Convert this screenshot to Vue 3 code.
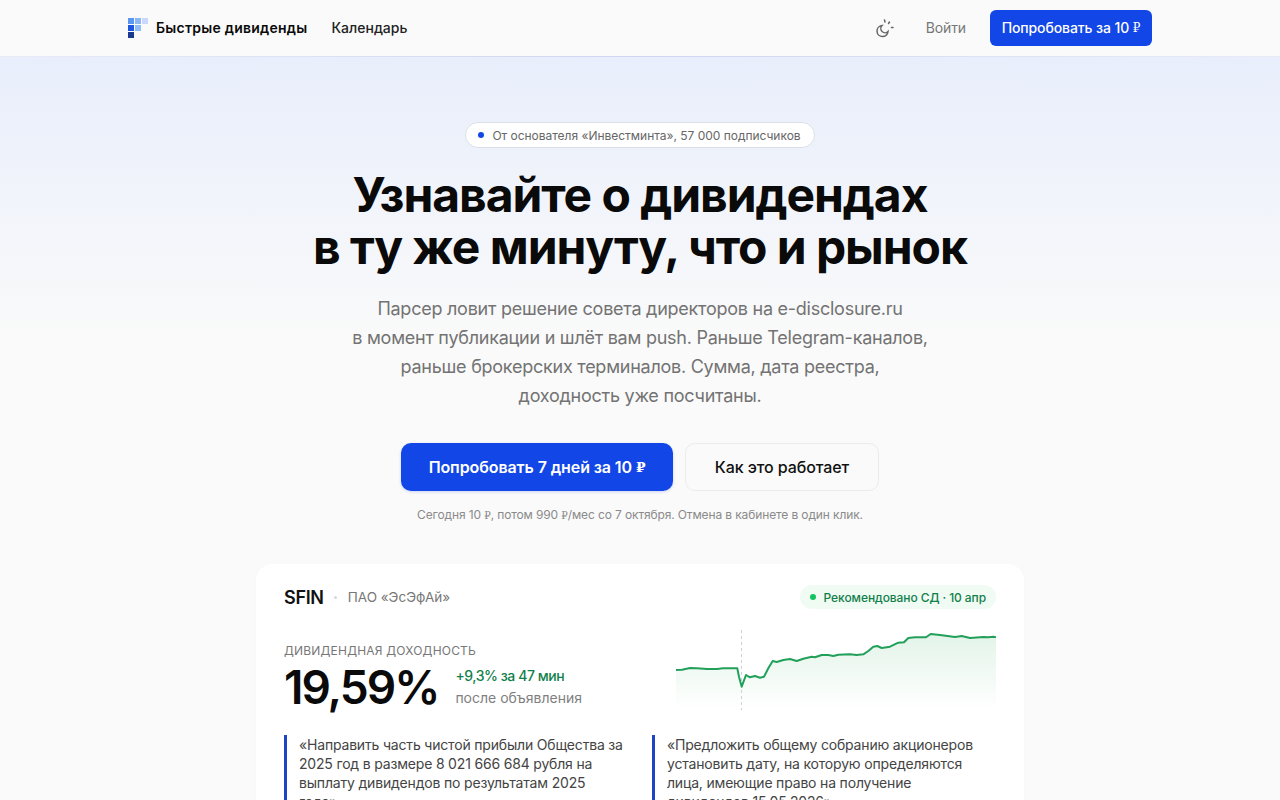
<script setup>
const logo = [
  '#5b96f0', '#8db8f5', '#c9d8fb',
  '#1d55e0', '#8fbdf5', 'transparent',
  '#1a3a8f', 'transparent', 'transparent'
]
const points = '676,670 682,669.7 690,668 697,668.3 707,669 717,669 723,668.3 737.3,668.3 739,676.7 741.7,686.7 746,675 750,677.3 755,676 760,677.7 764,676.7 768.3,668.3 772.7,661 776.7,662 783.3,660 790,659 796.7,661 803.3,658.7 811.7,656.7 815,657.3 821.7,655 828.3,655 833.3,656 838.3,654.7 850,654.3 856.7,655 863.3,654.3 868.3,651 873.3,646.7 877.3,646 881.7,648 890,646.7 898.3,642.7 904,642.3 908.3,638 915,637.3 926,637.3 930.7,634 940,635 955,637 961.7,636 970,638 983.3,637 988.3,637.3 993.3,636.7 996,637.3'
  .split(' ').map(p => { const [x, y] = p.split(',').map(Number); return `${x - 676},${y - 630}` }).join(' ')
const area = `0,80 ${points} 320,80`
</script>

<template>
  <div class="page">
    <header class="nav">
      <div class="nav-in">
        <div class="logo">
          <i v-for="(c, i) in logo" :key="i" :style="{ background: c }"></i>
        </div>
        <span class="brand">Быстрые дивиденды</span>
        <span class="link">Календарь</span>
        <span class="spacer"></span>
        <svg class="theme" width="20" height="20" viewBox="0 0 20 20" fill="none" stroke="#666" stroke-width="1.5" stroke-linecap="round">
          <path d="M7 7.6A5.5 5.5 0 1 0 13 13.4 3.8 3.8 0 0 1 7 7.6z" />
          <path d="M9.5 2 10 4" />
          <path d="M14.5 4 13.5 5.5" />
          <path d="M16.5 9.5H18" />
        </svg>
        <span class="login">Войти</span>
        <a class="btn-nav">Попробовать за 10 <span class="rub">₽</span></a>
      </div>
    </header>

    <section class="hero">
      <div class="chip"><i class="chip-dot"></i>От основателя «Инвестминта», 57 000 подписчиков</div>
      <h1>Узнавайте о дивидендах<br>в ту же минуту, что и рынок</h1>
      <p class="lead">
        Парсер ловит решение совета директоров на e-disclosure.ru<br>
        в момент публикации и шлёт вам push. Раньше Telegram-каналов,<br>
        раньше брокерских терминалов. Сумма, дата реестра,<br>
        доходность уже посчитаны.
      </p>
      <div class="actions">
        <a class="btn primary">Попробовать 7 дней за 10 <span class="rub">₽</span></a>
        <a class="btn ghost">Как это работает</a>
      </div>
      <p class="note">Сегодня 10 <span class="rub">₽</span>, потом 990 <span class="rub">₽</span>/мес со 7 октября. Отмена в кабинете в один клик.</p>

      <article class="card">
        <div class="card-head">
          <b class="ticker">SFIN</b>
          <i class="sep"></i>
          <span class="company">ПАО «ЭсЭфАй»</span>
          <span class="spacer"></span>
          <span class="pill"><i class="pill-dot"></i>Рекомендовано СД · 10 апр</span>
        </div>
        <div class="stats">
          <div>
            <div class="label">ДИВИДЕНДНАЯ ДОХОДНОСТЬ</div>
            <div class="yield-row">
              <div class="yield">19,59%</div>
              <div class="delta">
                <div class="up">+9,3% за 47 мин</div>
                <div class="after">после объявления</div>
              </div>
            </div>
          </div>
          <svg class="chart" width="320" height="80" viewBox="0 0 320 80">
            <defs>
              <linearGradient id="fill" x1="0" y1="0" x2="0" y2="1">
                <stop offset="0" stop-color="#16a34a" stop-opacity=".12" />
                <stop offset="1" stop-color="#16a34a" stop-opacity="0" />
              </linearGradient>
            </defs>
            <polygon :points="area" fill="url(#fill)" />
            <line x1="65.5" y1="0" x2="65.5" y2="80" stroke="#cfcfd4" stroke-width="1" stroke-dasharray="3 3" />
            <polyline :points="points" fill="none" stroke="#22a05a" stroke-width="2" stroke-linejoin="round" />
          </svg>
        </div>
        <div class="quotes">
          <blockquote>«Направить часть чистой прибыли Общества за 2025 год в размере 8 021 666 684 рубля на выплату дивидендов по результатам 2025 года»</blockquote>
          <blockquote>«Предложить общему собранию акционеров установить дату, на которую определяются лица, имеющие право на получение дивидендов 15.05.2026»</blockquote>
        </div>
      </article>
    </section>
  </div>
</template>

<style>
html, body { margin: 0; background: #fafafa; }
html { scrollbar-width: none; }
</style>

<style scoped>
.page {
  font-family: Inter, "Noto Sans", sans-serif;
  color: #0a0a0a;
  min-height: 800px;
  background: linear-gradient(180deg, #e8eefb 57px, #fafafa 340px);
}
.nav { height: 56px; background: #fafafa; border-bottom: 1px solid; border-image: linear-gradient(90deg, #e9ecf5, #d0d5f0 50%, #e9ecf5) 1; }
.nav-in { width: 1024px; height: 56px; margin: 0 auto; display: flex; align-items: center; }
.logo { display: grid; grid-template-columns: repeat(3, 6px); grid-auto-rows: 6px; gap: 1px; margin-right: 8px; }
.brand { font-size: 14px; font-weight: 600; letter-spacing: .25px; margin-right: 24px; padding-bottom: 2px; }
.link { font-size: 14px; font-weight: 500; color: #222; letter-spacing: 0; padding-bottom: 2px; }
.spacer { flex: 1; }
.theme { margin-right: 31px; margin-left: 2px; }
.login { font-size: 14px; color: #777; margin-right: 24px; padding-bottom: 2px; letter-spacing: -.1px; }
.btn-nav { height: 36px; width: 162px; display: flex; align-items: center; justify-content: center; box-sizing: border-box; border-radius: 6px; background: #1246e6; color: #fff; font-size: 14px; font-weight: 500; white-space: pre; letter-spacing: -.1px; padding-bottom: 1px; }
.rub { font-family: "DejaVu Serif", "Liberation Serif", serif; font-size: .86em; }
.hero { display: flex; flex-direction: column; align-items: center; padding-top: 65px; }
.chip { height: 26px; box-sizing: border-box; display: flex; align-items: center; padding: 0 13px 0 12px; border: 1px solid #dcdfe8; border-radius: 13px; background: #fff; font-size: 12px; color: #666; letter-spacing: -.02px; }
.chip-dot { width: 6px; height: 6px; border-radius: 50%; background: #1246e6; margin-right: 8px; }
h1 { margin: 21px 0 0; font-size: 48px; line-height: 52px; font-weight: 700; letter-spacing: -1.05px; text-align: center; color: #0a0a0a; }
.lead { margin: 21px 0 0; font-size: 18px; line-height: 29px; color: #737373; text-align: center; letter-spacing: -.25px; }
.actions { display: flex; gap: 12px; margin-top: 33px; }
.btn { height: 48px; display: flex; align-items: center; justify-content: center; box-sizing: border-box; border-radius: 10px; font-size: 16px; font-weight: 600; white-space: pre; letter-spacing: -.1px; padding-bottom: 1px; }
.primary { width: 272px; background: #1246e6; color: #fff; box-shadow: 0 1px 3px rgba(18,70,230,.2); }
.ghost { width: 194px; border: 1px solid #ececee; background: #fafafa; color: #111; font-weight: 500; }
.note { margin: 16px 0 0; font-size: 12px; line-height: 16px; color: #8a8a8a; letter-spacing: -.12px; }
.card { width: 768px; box-sizing: border-box; margin-top: 41px; padding: 21px 28px 28px; background: #fff; border-radius: 16px; box-shadow: 0 1px 3px rgba(0,0,0,.03); }
.card-head { display: flex; align-items: center; height: 24px; }
.ticker { font-size: 18px; font-weight: 600; letter-spacing: -.3px; color: #111; }
.sep { width: 3px; height: 3px; border-radius: 50%; background: #d8d8d8; margin: 0 11px 0 10px; }
.company { font-size: 13.5px; color: #777; }
.pill { height: 24px; display: flex; align-items: center; padding: 0 10px; border-radius: 12px; background: #f0fbf4; color: #11804a; font-size: 12px; font-weight: 500; letter-spacing: -.08px; }
.pill-dot { width: 6px; height: 6px; border-radius: 50%; background: #12c45e; margin-right: 8px; }
.stats { display: flex; justify-content: space-between; margin-top: 21px; height: 80px; }
.label { font-size: 12px; line-height: 16px; color: #777; letter-spacing: .2px; margin-top: 13px; }
.yield-row { display: flex; align-items: center; gap: 17px; margin-top: 4px; }
.yield { font-size: 46px; line-height: 48px; font-weight: 600; letter-spacing: -2px; color: #0a0a0a; }
.up { font-size: 14px; line-height: 20px; font-weight: 500; color: #11804a; letter-spacing: -.45px; }
.after { font-size: 14px; line-height: 20px; color: #808080; margin-top: 2px; }
.chart { display: block; }
.quotes { display: grid; grid-template-columns: 1fr 1fr; gap: 24px; margin-top: 25px; }
blockquote { margin: 0; border-left: 3px solid #1d45c8; padding: 0 3px 0 12px; font-size: 14px; line-height: 19px; color: #444; letter-spacing: -.18px; }
</style>
